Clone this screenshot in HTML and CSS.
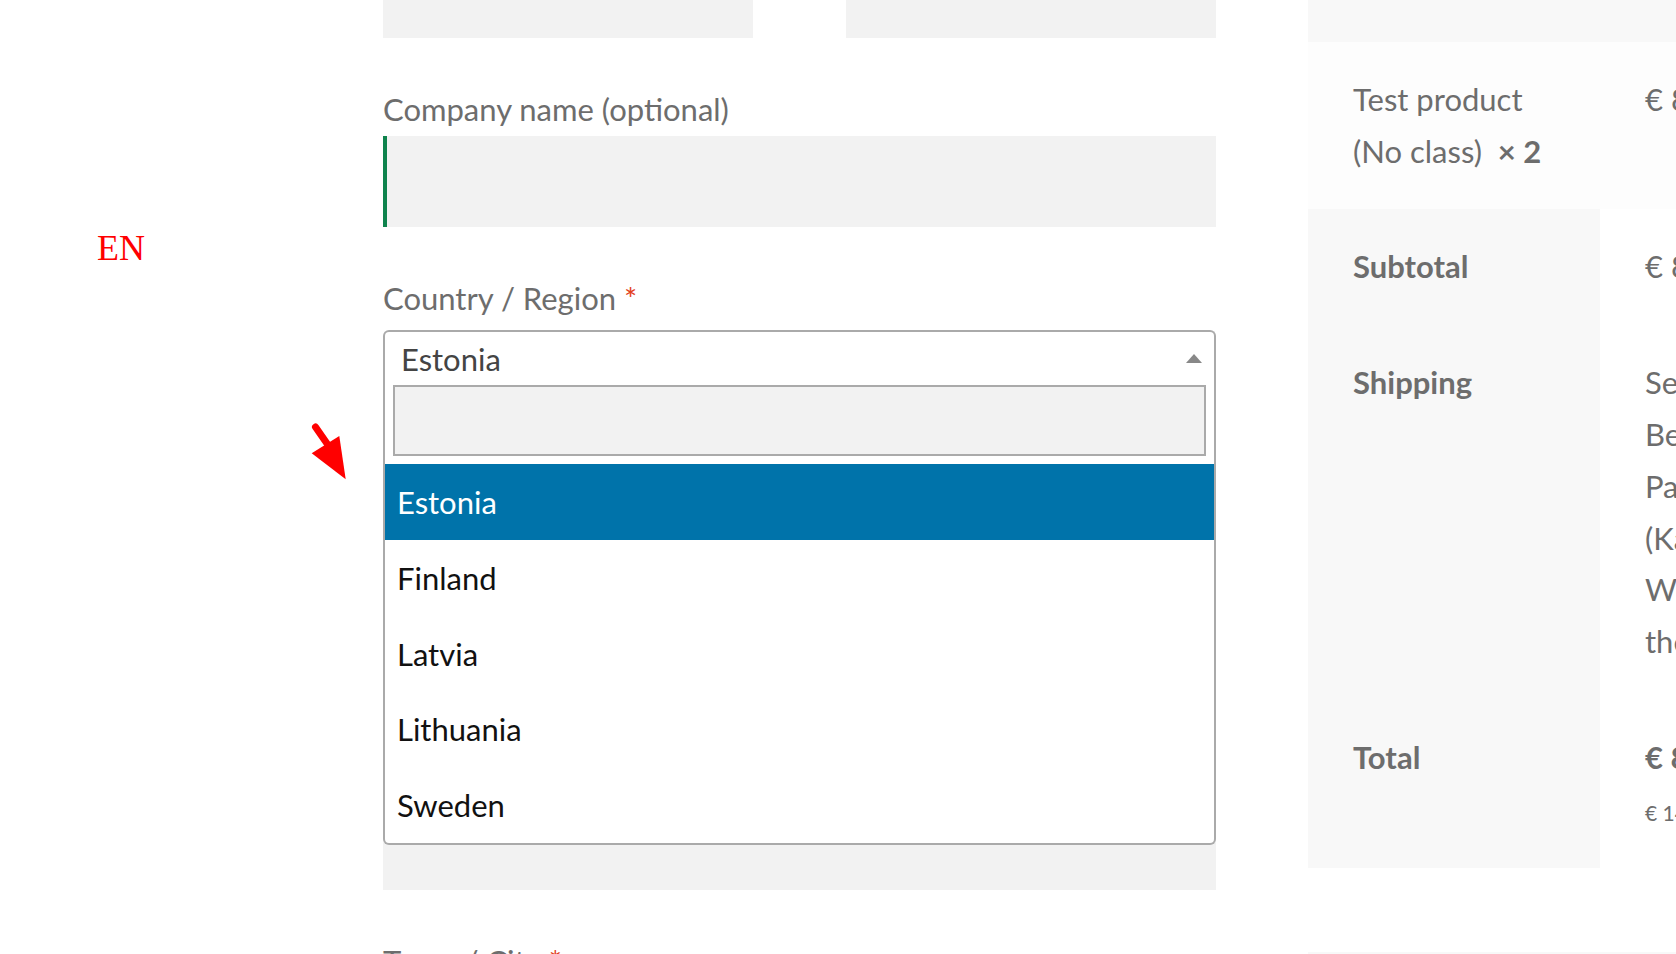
FILE: index.html
```html
<!DOCTYPE html>
<html lang="en">
<head>
    <meta charset="UTF-8">
    <meta name="viewport" content="width=device-width, initial-scale=1.0">
    <title>Checkout</title>
    <link rel="stylesheet" href="styles.css">
</head>
<body>
    <!-- Language switcher + hint arrow float over the page -->
    <div class="lang-switch">EN</div>
    <svg class="hint-arrow" width="60" height="75" viewBox="0 0 60 75">
        <line x1="15.5" y1="12" x2="28" y2="30" stroke="#ff0000" stroke-width="7" stroke-linecap="round"/>
        <polygon points="11.7,38.3 39.3,21 45.7,64.3" fill="#ff0000"/>
    </svg>

    <div class="page">
        <!-- Billing form -->
        <form class="billing">
            <div class="row-split">
                <div class="field">
                    <label for="first_name">First name <abbr class="required">*</abbr></label>
                    <input type="text" id="first_name" class="text">
                </div>
                <div class="field">
                    <label for="last_name">Last name <abbr class="required">*</abbr></label>
                    <input type="text" id="last_name" class="text">
                </div>
            </div>

            <div class="field">
                <label for="company">Company name (optional)</label>
                <input type="text" id="company" class="text validated">
            </div>

            <div class="field">
                <label for="country">Country / Region <abbr class="required">*</abbr></label>
                <div class="select2 open">
                    <div class="selection">
                        <span class="rendered">Estonia</span>
                        <span class="arrow"></span>
                    </div>
                    <div class="dropdown">
                        <div class="search">
                            <input type="text" class="search-field" id="country">
                        </div>
                        <ul class="results">
                            <li class="option highlighted">Estonia</li>
                            <li class="option">Finland</li>
                            <li class="option">Latvia</li>
                            <li class="option">Lithuania</li>
                            <li class="option">Sweden</li>
                        </ul>
                    </div>
                </div>
            </div>

            <!-- sits under the open dropdown -->
            <div class="field street">
                <input type="text" id="address_1" class="text" aria-label="Street address">
                <input type="text" id="address_2" class="text" aria-label="Apartment, suite, unit">
            </div>

            <div class="field">
                <label for="city">Town / City <abbr class="required">*</abbr></label>
                <input type="text" id="city" class="text">
            </div>
        </form>

        <!-- Order review -->
        <div class="order-review">
            <table class="review-table">
                <thead>
                    <tr>
                        <th class="col-name">Product</th>
                        <th class="col-total">Subtotal</th>
                    </tr>
                </thead>
                <tbody>
                    <tr class="cart-item">
                        <td>Test product<br>(No class)&nbsp; <strong>×&nbsp;2</strong></td>
                        <td>€ 8.90</td>
                    </tr>
                </tbody>
                <tfoot>
                    <tr>
                        <th>Subtotal</th>
                        <td>€ 8.90</td>
                    </tr>
                    <tr>
                        <th>Shipping</th>
                        <td>Select parcel locker<br>Best price delivery<br>Parcel terminal<br>(Kaubamaja)<br>We will send<br>the parcel</td>
                    </tr>
                    <tr>
                        <th>Total</th>
                        <td><strong>€ 8.90</strong><br><small>€ 14.80</small></td>
                    </tr>
                </tfoot>
            </table>
            <div class="payment"></div>
        </div>
    </div>
</body>
</html>
```

FILE: styles.css
```css
* {
    margin: 0;
    padding: 0;
    box-sizing: border-box;
}

html, body {
    width: 1676px;
    height: 954px;
    overflow: hidden;
}

body {
    font-family: Lato, 'Open Sans', sans-serif;
    font-size: 31px;
    line-height: 51.8px;
    color: #6d6d6d;
    background: #fff;
    position: relative;
}

.lang-switch {
    position: absolute;
    left: 97px;
    top: 230px;
    font-family: 'Liberation Serif', serif;
    font-size: 36px;
    line-height: 1;
    color: #ff0000;
    z-index: 5;
}

.hint-arrow {
    position: absolute;
    left: 300px;
    top: 415px;
    z-index: 5;
}

.page {
    display: flex;
    align-items: flex-start;
    gap: 92px;
    padding-left: 383px;
}

/* ---------- form ---------- */

.billing {
    flex: 0 0 833px;
    margin-top: -106px;
}

.row-split {
    display: flex;
    justify-content: space-between;
}

.row-split .field {
    width: 370px;
}

.field {
    margin-bottom: 45px;
}

label {
    display: block;
    margin-bottom: 1px;
    line-height: 52px;
}

.required {
    color: #e2401c;
    text-decoration: none;
    border: 0;
}

input.text {
    display: block;
    width: 100%;
    height: 91px;
    border: 0;
    background: #f2f2f2;
    font: inherit;
}

input.text.validated {
    box-shadow: inset 4px 0 0 #0f834d;
}

.street {
    padding-top: 255px;
}

.street .text + .text {
    margin-top: 20px;
}

/* ---------- select2 (open) ---------- */

.select2 {
    position: relative;
    height: 58px;
    margin-top: 6px;
}

.selection {
    position: relative;
    height: 47px;
    background: #fff;
    border: 2px solid #aaa;
    border-bottom: 0;
    border-radius: 6px 6px 0 0;
}

.rendered {
    display: block;
    height: 45px;
    padding-left: 16px;
    line-height: 54px;
    color: #444;
}

.arrow {
    position: absolute;
    right: 12px;
    top: 22px;
    width: 0;
    height: 0;
    border-style: solid;
    border-width: 0 8px 9px 8px;
    border-color: transparent transparent #888 transparent;
}

.dropdown {
    position: absolute;
    top: 47px;
    left: 0;
    right: 0;
    background: #fff;
    border: 2px solid #aaa;
    border-top: 0;
    border-radius: 0 0 6px 6px;
    z-index: 10;
}

.search {
    padding: 8px;
}

.search-field {
    display: block;
    width: 100%;
    height: 71px;
    border: 2px solid #aaa;
    background: #f2f2f2;
    font: inherit;
}

.results {
    list-style: none;
}

.option {
    padding: 13px 12px 11px;
    line-height: 51.8px;
    color: #111;
}

.option.highlighted {
    background: #0073aa;
    color: #fff;
}

/* ---------- order review ---------- */

.order-review {
    flex: 0 0 792px;
    margin-top: -74px;
}

.review-table {
    width: 792px;
    table-layout: fixed;
    border-collapse: collapse;
    margin-bottom: 84px;
}

.review-table th,
.review-table td {
    padding: 32px 45px;
    text-align: left;
    vertical-align: top;
    white-space: nowrap;
}

.review-table .col-name {
    width: 292px;
}

.review-table thead th {
    background: #f8f8f8;
    font-weight: 700;
}

.review-table tbody td {
    background: #fdfdfd;
}

.review-table tfoot th {
    background: #f8f8f8;
    font-weight: 700;
}

.review-table tfoot td {
    background: #fff;
}

.review-table small {
    font-size: 21px;
    line-height: 1;
}

.payment {
    height: 300px;
    background: #f8f8f8;
}
```
